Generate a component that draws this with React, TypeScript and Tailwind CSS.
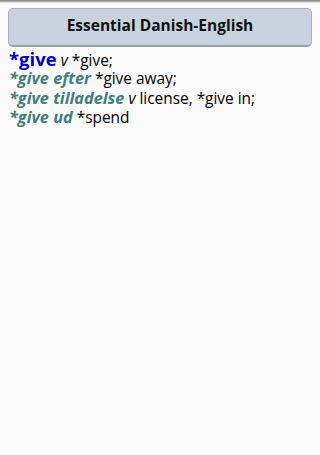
import React from "react";

export default function App() {
  return (
    <div
      className="w-[320px] h-[455px] bg-[#f9f9f9] relative overflow-hidden"
      style={{ fontFamily: '"Open Sans", "Noto Sans", sans-serif' }}
    >
      <div className="h-[3px] bg-gradient-to-b from-[#7a7a7a] via-[#b0b0b0] to-[#f0f0f0]" />
      <div className="px-[8px] pt-[5px]">
        <div className="h-[39px] rounded-[5px] bg-[#c9d3df] border border-[#a9b1bd] border-b-[2px] border-b-[#98a0ab] flex items-start justify-center pt-[5px]">
          <span className="text-[15.5px] font-bold text-[#111]">Essential Danish-English</span>
        </div>
      </div>
      <div className="px-[9px] pt-[1px] text-[15.4px] text-black">
        <div className="h-[21px] leading-[21px] whitespace-nowrap">
          <span className="text-[18.5px] leading-[21px] font-bold text-[#0000c8]">*give</span>{" "}
          <span className="italic">v</span> *give;
        </div>
        <div className="h-[19px] leading-[19px] whitespace-nowrap">
          <span className="text-[16.3px] leading-[19px] font-bold italic text-[#3f7f7f]">*give efter</span> *give away;
        </div>
        <div className="h-[20px] leading-[20px] whitespace-nowrap">
          <span className="text-[16.3px] leading-[20px] font-bold italic text-[#3f7f7f]">*give tilladelse</span>{" "}
          <span className="italic">v</span> license, *give in;
        </div>
        <div className="h-[19px] leading-[19px] whitespace-nowrap">
          <span className="text-[16.3px] leading-[19px] font-bold italic text-[#3f7f7f]">*give ud</span> *spend
        </div>
      </div>
    </div>
  );
}
